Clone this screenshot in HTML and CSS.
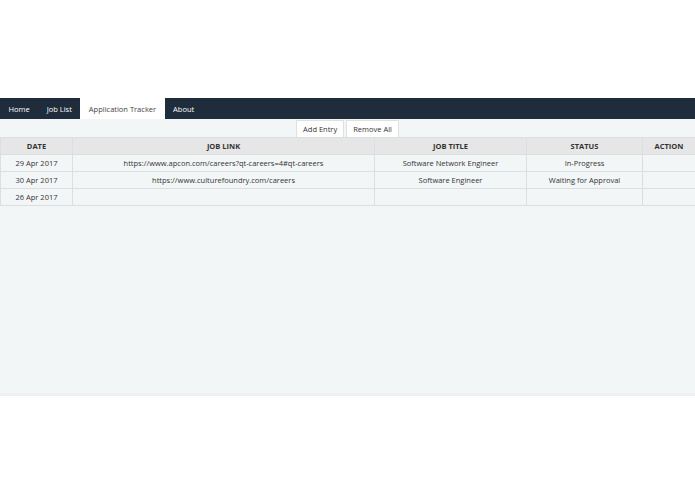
FILE: index.html
```html
<!DOCTYPE html>
<html lang="en">
<head>
    <meta charset="UTF-8">
    <title>Application Tracker</title>
    <link rel="stylesheet" href="styles.css">
</head>
<body>
    <div class="top-space"></div>

    <!-- Main Nav -->
    <nav class="nav">
        <a class="nav-item" href="#">Home</a>
        <a class="nav-item" href="#">Job List</a>
        <a class="nav-item active" href="#">Application Tracker</a>
        <a class="nav-item" href="#">About</a>
    </nav>

    <main class="content">
        <!-- Toolbar -->
        <div class="toolbar">
            <button class="btn">Add Entry</button>
            <button class="btn">Remove All</button>
        </div>

        <!-- Tracker Table -->
        <table class="tracker">
            <thead>
                <tr>
                    <th class="col-date">DATE</th>
                    <th class="col-link">JOB LINK</th>
                    <th class="col-title">JOB TITLE</th>
                    <th class="col-status">STATUS</th>
                    <th class="col-action">ACTION</th>
                </tr>
            </thead>
            <tbody>
                <tr>
                    <td>29 Apr 2017</td>
                    <td>https://www.apcon.com/careers?qt-careers=4#qt-careers</td>
                    <td>Software Network Engineer</td>
                    <td>In-Progress</td>
                    <td></td>
                </tr>
                <tr>
                    <td>30 Apr 2017</td>
                    <td>https://www.culturefoundry.com/careers</td>
                    <td>Software Engineer</td>
                    <td>Waiting for Approval</td>
                    <td></td>
                </tr>
                <tr>
                    <td>26 Apr 2017</td>
                    <td></td>
                    <td></td>
                    <td></td>
                    <td></td>
                </tr>
            </tbody>
        </table>
    </main>
</body>
</html>
```

FILE: styles.css
```css
/* General Reset */
* {
    margin: 0;
    padding: 0;
    box-sizing: border-box;
}

body {
    font-family: 'Open Sans', 'DejaVu Sans', sans-serif;
    font-size: 7.5px;
    color: #333;
    background: #fff;
}

.top-space {
    height: 98px;
}

/* Nav Bar */
.nav {
    display: flex;
    height: 21px;
    background: #1f2c3b;
}

.nav-item {
    display: flex;
    align-items: center;
    padding: 0 8.5px;
    color: #fff;
    text-decoration: none;
    font-size: 7.5px;
}

.nav-item.active {
    background: #fff;
    color: #444;
}

/* Content Area */
.content {
    height: 277px;
    background: #f3f6f7;
    border-bottom: 3px solid #eef1f1;
}

.toolbar {
    display: flex;
    justify-content: center;
    gap: 2px;
    height: 18px;
    padding-top: 1px;
}

.btn {
    font-family: inherit;
    font-size: 7.5px;
    color: #333;
    background: #fff;
    border: 1px solid #e0e0e0;
    border-bottom: none;
    padding: 0 6px;
    height: 17px;
}

/* Table */
.tracker {
    width: 100%;
    border-collapse: collapse;
    table-layout: fixed;
    text-align: center;
}

.tracker th,
.tracker td {
    border: 1px solid #dcdfe0;
    height: 17px;
    padding: 0 4px;
    white-space: nowrap;
    overflow: hidden;
}

.tracker th {
    background: #e6e6e6;
    font-weight: bold;
    color: #333;
}

.col-date { width: 72px; }
.col-link { width: 302px; }
.col-title { width: 152px; }
.col-status { width: 116px; }
.col-action { width: 53px; }
```
